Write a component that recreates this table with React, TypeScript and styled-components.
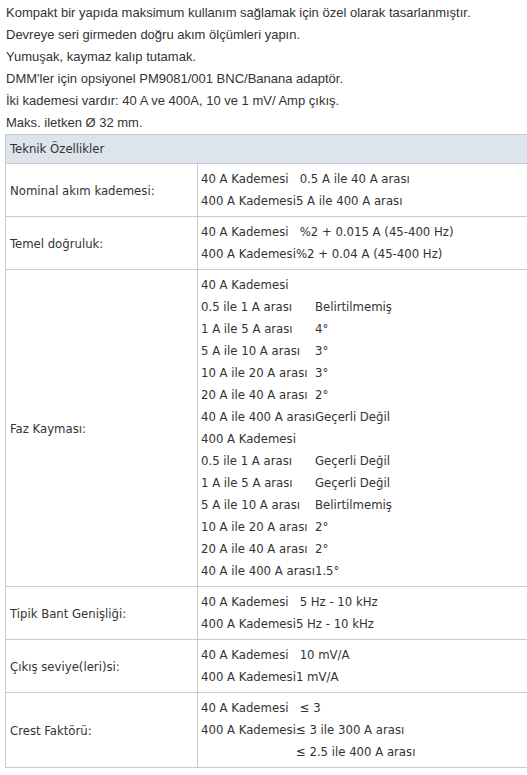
import React from "react";
import styled, { createGlobalStyle } from "styled-components";

type Spec = {
  label: string;
  lines: [string, string][];
};

const specs: Spec[] = [
  {
    label: "Nominal akım kademesi:",
    lines: [
      ["40 A Kademesi", "\u00a00.5 A ile 40 A arası"],
      ["400 A Kademesi", "5 A ile 400 A arası"],
    ],
  },
  {
    label: "Temel doğruluk:",
    lines: [
      ["40 A Kademesi", "\u00a0%2 + 0.015 A (45-400 Hz)"],
      ["400 A Kademesi", "%2 + 0.04 A (45-400 Hz)"],
    ],
  },
  {
    label: "Faz Kayması:",
    lines: [
      ["40 A Kademesi", ""],
      ["0.5 ile 1 A arası", "Belirtilmemiş"],
      ["1 A ile 5 A arası", "4°"],
      ["5 A ile 10 A arası", "3°"],
      ["10 A ile 20 A arası", "3°"],
      ["20 A ile 40 A arası", "2°"],
      ["40 A ile 400 A arası", "Geçerli Değil"],
      ["400 A Kademesi", ""],
      ["0.5 ile 1 A arası", "Geçerli Değil"],
      ["1 A ile 5 A arası", "Geçerli Değil"],
      ["5 A ile 10 A arası", "Belirtilmemiş"],
      ["10 A ile 20 A arası", "2°"],
      ["20 A ile 40 A arası", "2°"],
      ["40 A ile 400 A arası", "1.5°"],
    ],
  },
  {
    label: "Tipik Bant Genişliği:",
    lines: [
      ["40 A Kademesi", "\u00a05 Hz - 10 kHz"],
      ["400 A Kademesi", "5 Hz - 10 kHz"],
    ],
  },
  {
    label: "Çıkış seviye(leri)si:",
    lines: [
      ["40 A Kademesi", "\u00a010 mV/A"],
      ["400 A Kademesi", "1 mV/A"],
    ],
  },
  {
    label: "Crest Faktörü:",
    lines: [
      ["40 A Kademesi", "\u00a0≤ 3"],
      ["400 A Kademesi", "≤ 3 ile 300 A arası"],
      ["", "≤ 2.5 ile 400 A arası"],
    ],
  },
];

const intro = [
  "Kompakt bir yapıda maksimum kullanım sağlamak için özel olarak tasarlanmıştır.",
  "Devreye seri girmeden doğru akım ölçümleri yapın.",
  "Yumuşak, kaymaz kalıp tutamak.",
  "DMM'ler için opsiyonel PM9081/001 BNC/Banana adaptör.",
  "İki kademesi vardır: 40 A ve 400A, 10 ve 1 mV/ Amp çıkış.",
  "Maks. iletken Ø 32 mm.",
];

function App() {
  return (
    <>
      <GlobalStyle />
      <Page>
        <Intro>
          {intro.map((t) => (
            <IntroLine key={t}>{t}</IntroLine>
          ))}
        </Intro>
        <SpecTable>
          <thead>
            <tr>
              <HeadCell colSpan={2}>Teknik Özellikler</HeadCell>
            </tr>
          </thead>
          <tbody>
            {specs.map((s) => (
              <tr key={s.label}>
                <LabelCell>{s.label}</LabelCell>
                <ValueCell>
                  <Inner>
                    <tbody>
                      {s.lines.map(([a, b], i) => (
                        <tr key={i}>
                          <InnerCell>{a}</InnerCell>
                          <InnerCell>{b}</InnerCell>
                        </tr>
                      ))}
                    </tbody>
                  </Inner>
                </ValueCell>
              </tr>
            ))}
          </tbody>
        </SpecTable>
      </Page>
    </>
  );
}

const GlobalStyle = createGlobalStyle`
  html, body {
    margin: 0;
    background: #ffffff;
    overflow: hidden;
  }
`;

const Page = styled.div`
  padding: 2px 0 0 5px;
  color: #333333;
  overflow: hidden;
`;

const Intro = styled.div`
  padding-left: 1px;
  font-family: "Liberation Sans", Arial, sans-serif;
  font-size: 13px;
`;

const IntroLine = styled.div`
  line-height: 22px;
  white-space: nowrap;
`;

const SpecTable = styled.table`
  border-collapse: collapse;
  width: 540px;
  font-family: "DejaVu Sans Condensed", "DejaVu Sans", sans-serif;
  font-size: 13px;
  color: #333333;
`;

const HeadCell = styled.th`
  background: #dde4eb;
  border: 1px solid #c6ccd3;
  text-align: left;
  font-weight: normal;
  padding: 4px 4px;
  line-height: 20px;
`;

const LabelCell = styled.td`
  width: 183px;
  border: 1px solid #c6ccd3;
  padding: 4px 4px;
  vertical-align: middle;
  white-space: nowrap;
`;

const ValueCell = styled.td`
  border: 1px solid #c6ccd3;
  padding: 4px 3px;
  vertical-align: middle;
`;

const Inner = styled.table`
  border-collapse: collapse;
`;

const InnerCell = styled.td`
  padding: 0;
  line-height: 22px;
  white-space: nowrap;
`;

export default App;
